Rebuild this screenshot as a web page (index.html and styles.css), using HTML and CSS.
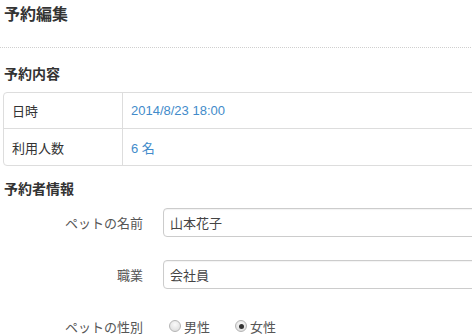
FILE: index.html
```html
<!DOCTYPE html>
<html lang="ja">
<head>
<meta charset="utf-8">
<link rel="stylesheet" href="styles.css">
</head>
<body>
<div class="viewport">
<div class="page">
  <h1 class="title">予約編集</h1>
  <h2 class="section">予約内容</h2>
  <div class="info">
    <div class="info-row">
      <div class="info-key">日時</div>
      <div class="info-val">2014/8/23 18:00</div>
    </div>
    <div class="info-row">
      <div class="info-key">利用人数</div>
      <div class="info-val">6 名</div>
    </div>
  </div>
  <h2 class="section section-2">予約者情報</h2>
  <div class="form">
    <div class="form-row">
      <label class="form-label">ペットの名前</label>
      <div class="form-control">山本花子</div>
    </div>
    <div class="form-row row-2">
      <label class="form-label">職業</label>
      <div class="form-control">会社員</div>
    </div>
    <div class="form-row row-3">
      <label class="form-label">ペットの性別</label>
      <div class="radios">
        <span class="radio"><span class="dot"></span>男性</span>
        <span class="radio"><span class="dot checked"></span>女性</span>
      </div>
    </div>
  </div>
</div>
</div>
</body>
</html>
```
FILE: styles.css
```css
html, body {
  margin: 0;
  padding: 0;
  overflow: hidden;
  background: #fff;
}
body {
  font-family: "Liberation Sans", "Noto Sans CJK JP", sans-serif;
  color: #333;
  font-size: 13px;
}
.viewport {
  width: 472px;
  height: 336px;
  overflow: hidden;
}
.page {
  width: 640px;
  padding: 0 0 0 3px;
}
.title {
  margin: 4px 0 0 -3px;
  padding: 0 0 21px 4px;
  font-size: 16px;
  line-height: 22px;
  font-weight: bold;
  color: #333;
  border-bottom: 1px dotted #cfcfcf;
}
.section {
  margin: 16px 0 0 1px;
  font-size: 14px;
  line-height: 20px;
  font-weight: bold;
  color: #333;
}
.section-2 {
  margin-top: 13px;
}
.info {
  margin-top: 8px;
  border: 1px solid #ddd;
  border-radius: 4px;
}
.info-row {
  display: flex;
  height: 35px;
  align-items: center;
}
.info-row + .info-row {
  border-top: 1px solid #ddd;
  height: 36px;
}
.info-key {
  width: 110px;
  padding-left: 8px;
  height: 100%;
  display: flex;
  align-items: center;
  border-right: 1px solid #ddd;
  color: #333;
}
.info-val {
  padding-left: 8px;
  color: #428bca;
}
.form-row {
  display: flex;
  align-items: center;
  margin-top: 9px;
}
.row-2 {
  margin-top: 23px;
}
.row-3 {
  margin-top: 27px;
  height: 20px;
}
.form-label {
  width: 140px;
  text-align: right;
  color: #555;
  margin-right: 20px;
}
.form-control {
  box-sizing: border-box;
  width: 400px;
  height: 29px;
  border: 1px solid #ccc;
  border-radius: 4px;
  padding: 0 6px;
  display: flex;
  align-items: center;
  color: #444;
  box-shadow: inset 0 1px 1px rgba(0,0,0,0.05);
}
.radios {
  display: flex;
  align-items: center;
  gap: 25px;
  margin-left: 6px;
  color: #555;
}
.radio {
  display: flex;
  align-items: center;
  gap: 3px;
}
.dot {
  box-sizing: border-box;
  width: 12px;
  height: 12px;
  border-radius: 50%;
  border: 1px solid #b5b5b5;
  background: radial-gradient(circle at 50% 35%, #fafafa, #d8d8d8);
  display: flex;
  align-items: center;
  justify-content: center;
}
.dot.checked::after {
  content: "";
  width: 5px;
  height: 5px;
  border-radius: 50%;
  background: #333;
}
```
